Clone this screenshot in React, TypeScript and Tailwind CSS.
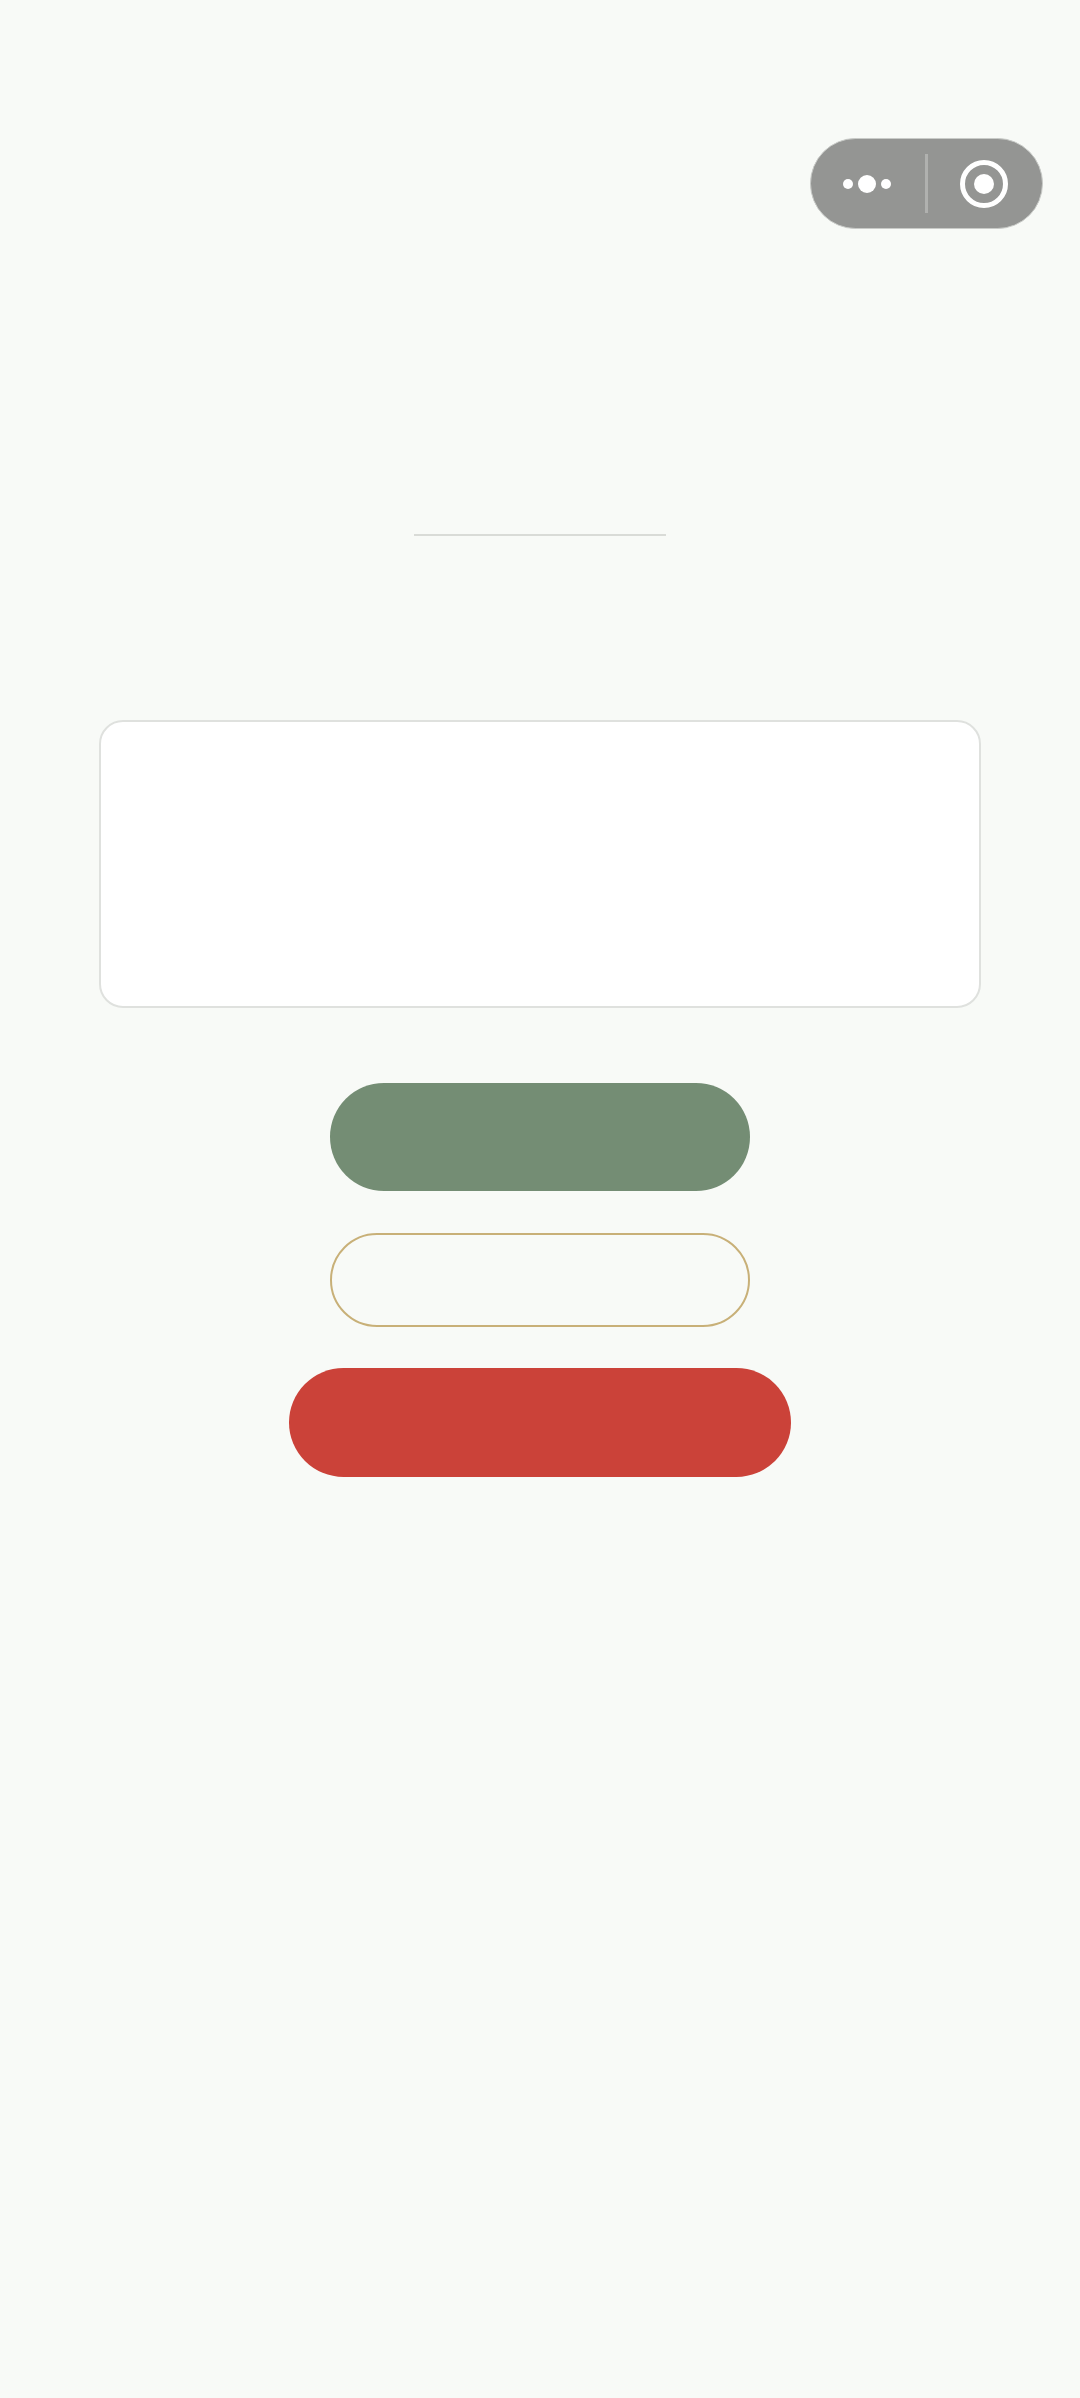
import React from 'react';

const Capsule: React.FC = () => {
  return (
    <div className="flex h-[91px] w-[233px] items-center rounded-full border border-[#c9cbc8] bg-[#949593]">
      <div className="flex w-[114px] items-center gap-[5px] pl-[32px]">
        <span className="h-[10px] w-[10px] rounded-full bg-white" />
        <span className="h-[18px] w-[18px] rounded-full bg-white" />
        <span className="h-[10px] w-[10px] rounded-full bg-white" />
      </div>
      <div className="h-[59px] w-[3px] bg-[#b0b1af]" />
      <div className="flex flex-1 items-center justify-center pr-[2px]">
        <div className="flex h-[48px] w-[48px] items-center justify-center rounded-full border-[5px] border-white">
          <span className="h-[20px] w-[20px] rounded-full bg-white" />
        </div>
      </div>
    </div>
  );
};

const App: React.FC = () => {
  return (
    <div className="flex min-h-[2398px] flex-col items-center bg-[#f8faf7] pt-[138px]">
      <div className="flex w-full justify-end pr-[37px]">
        <Capsule />
      </div>

      <div className="mt-[305px] h-[2px] w-[252px] bg-[#d9dbd7]" />

      <div className="mt-[184px] h-[288px] w-[882px] rounded-[24px] border-2 border-[#dfe1de] bg-white" />

      <button className="mt-[75px] h-[108px] w-[420px] rounded-full bg-[#748d74]" />
      <button className="mt-[42px] h-[94px] w-[420px] rounded-full border-2 border-[#c8b078]" />
      <button className="mt-[41px] h-[109px] w-[502px] rounded-full bg-[#cb4239]" />
    </div>
  );
};

export default App;
